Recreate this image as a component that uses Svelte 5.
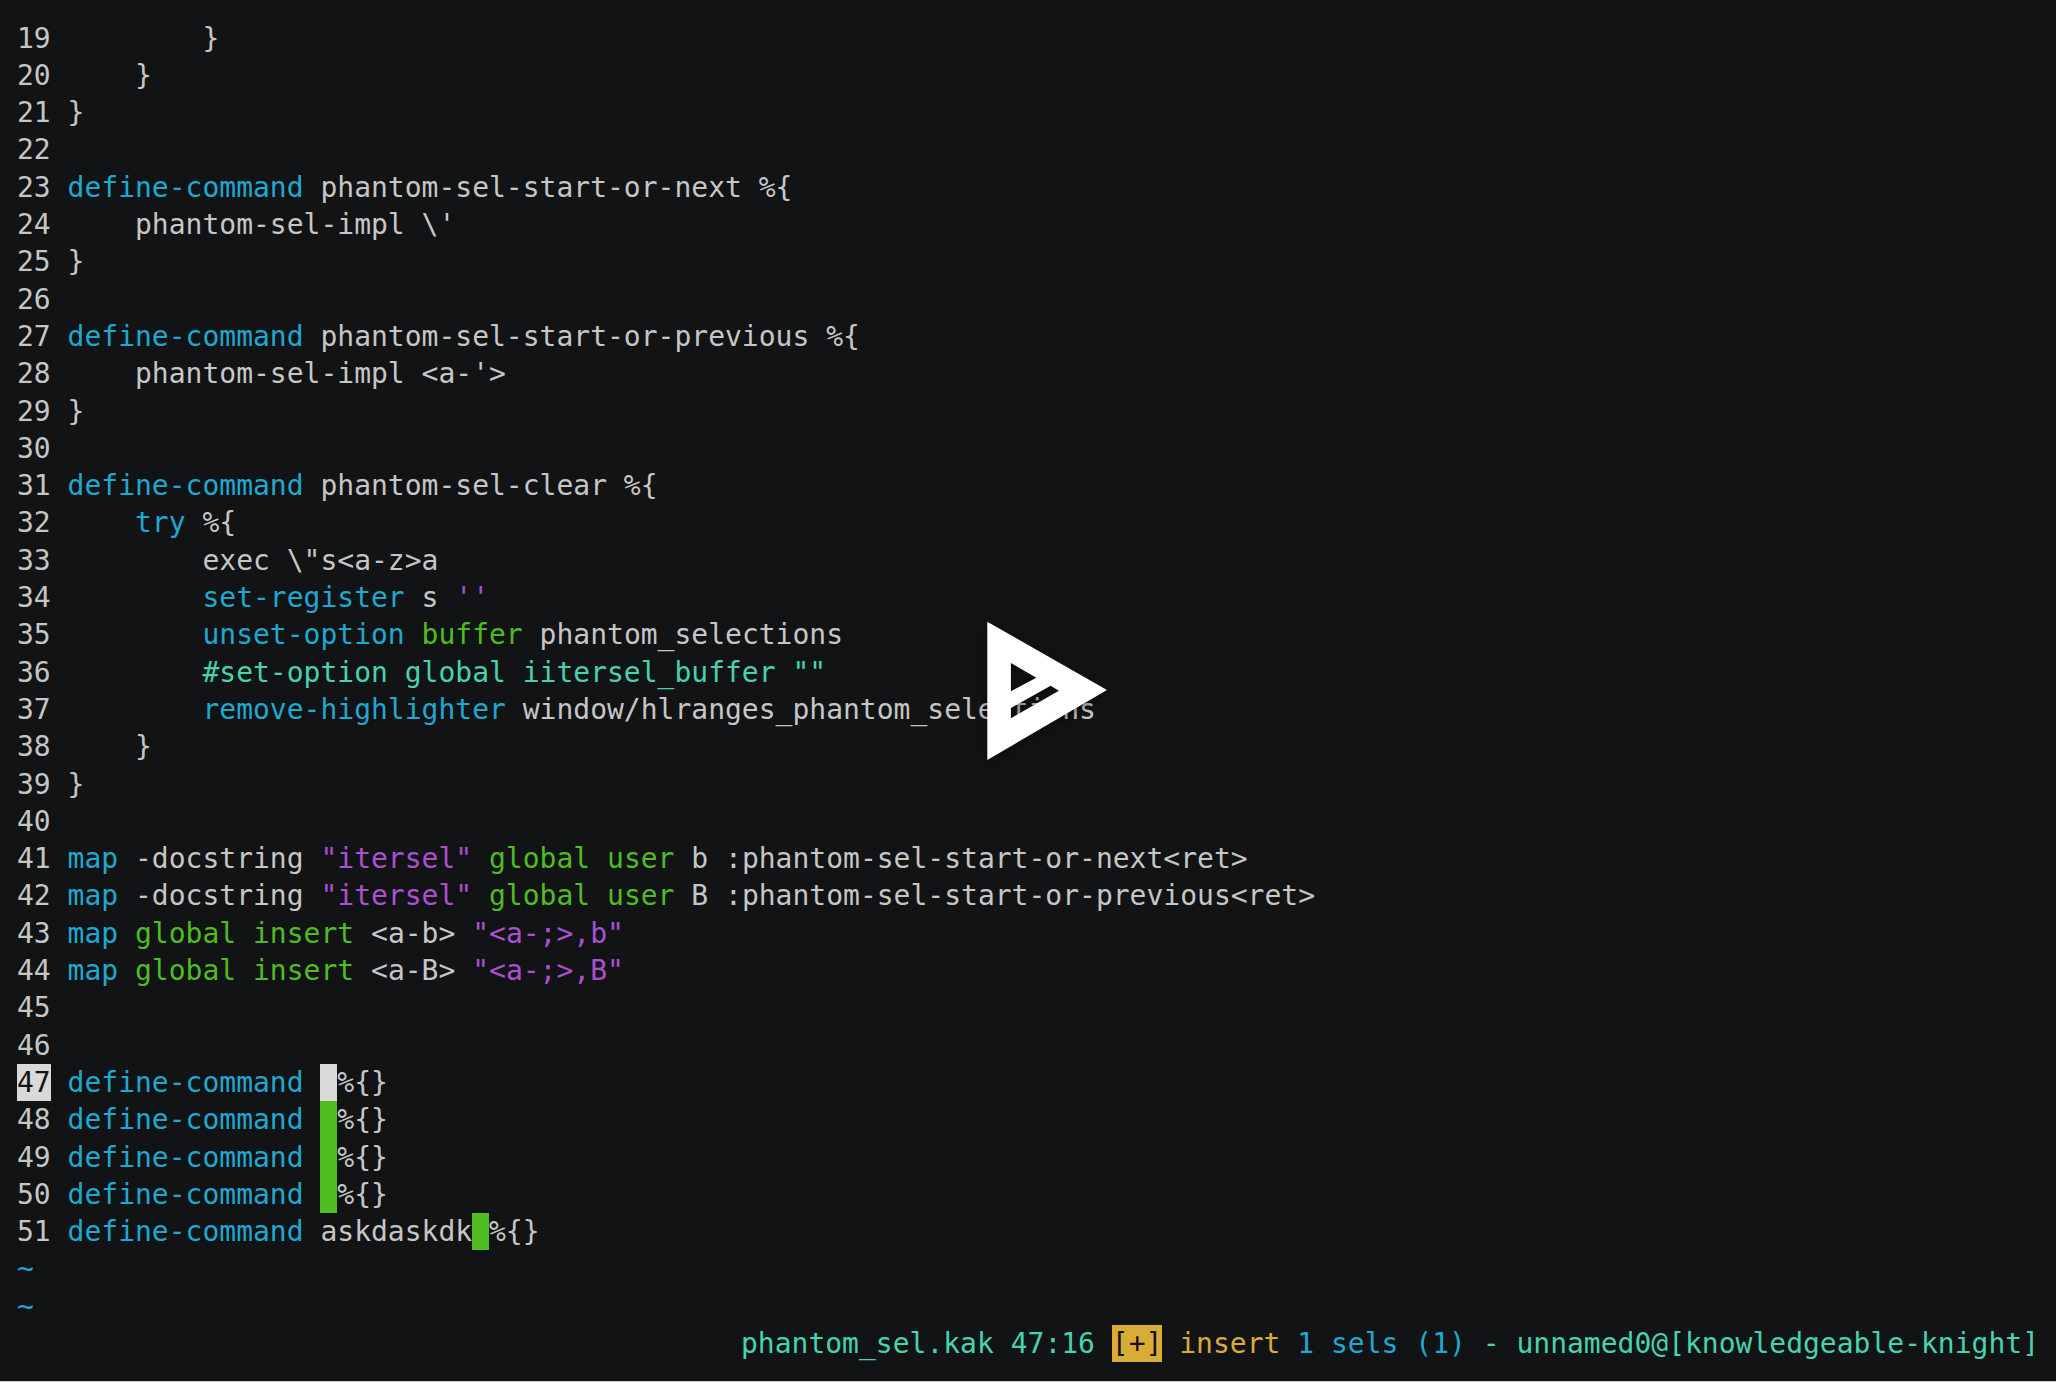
<script>
  const d = 'd', c = 'c', g = 'g', p = 'p', t = 't';
  const dc = [c, 'define-command'];
  const rows = [
    [19, [[d, '        }']]],
    [20, [[d, '    }']]],
    [21, [[d, '}']]],
    [22, []],
    [23, [dc, [d, ' phantom-sel-start-or-next %{']]],
    [24, [[d, '    phantom-sel-impl \\\'']]],
    [25, [[d, '}']]],
    [26, []],
    [27, [dc, [d, ' phantom-sel-start-or-previous %{']]],
    [28, [[d, "    phantom-sel-impl <a-'>"]]],
    [29, [[d, '}']]],
    [30, []],
    [31, [dc, [d, ' phantom-sel-clear %{']]],
    [32, [[d, '    '], [c, 'try'], [d, ' %{']]],
    [33, [[d, '        exec \\"s<a-z>a']]],
    [34, [[d, '        '], [c, 'set-register'], [d, ' s '], [p, "''"]]],
    [35, [[d, '        '], [c, 'unset-option'], [d, ' '], [g, 'buffer'], [d, ' phantom_selections']]],
    [36, [[d, '        '], [t, '#set-option global iitersel_buffer ""']]],
    [37, [[d, '        '], [c, 'remove-highlighter'], [d, ' window/hlranges_phantom_selections']]],
    [38, [[d, '    }']]],
    [39, [[d, '}']]],
    [40, []],
    [41, [[c, 'map'], [d, ' -docstring '], [p, '"itersel"'], [d, ' '], [g, 'global'], [d, ' '], [g, 'user'], [d, ' b :phantom-sel-start-or-next<ret>']]],
    [42, [[c, 'map'], [d, ' -docstring '], [p, '"itersel"'], [d, ' '], [g, 'global'], [d, ' '], [g, 'user'], [d, ' B :phantom-sel-start-or-previous<ret>']]],
    [43, [[c, 'map'], [d, ' '], [g, 'global'], [d, ' '], [g, 'insert'], [d, ' <a-b> '], [p, '"<a-;>,b"']]],
    [44, [[c, 'map'], [d, ' '], [g, 'global'], [d, ' '], [g, 'insert'], [d, ' <a-B> '], [p, '"<a-;>,B"']]],
    [45, []],
    [46, []],
    [47, [dc, [d, ' '], ['cur', ' '], [d, '%{}']]],
    [48, [dc, [d, ' '], ['sel', ' '], [d, '%{}']]],
    [49, [dc, [d, ' '], ['sel', ' '], [d, '%{}']]],
    [50, [dc, [d, ' '], ['sel', ' '], [d, '%{}']]],
    [51, [dc, [d, ' askdaskdk'], ['sel', ' '], [d, '%{}']]]
  ];
  const status = [
    [t, 'phantom_sel.kak 47:16 '],
    ['mod', '[+]'],
    ['y', ' insert '],
    [c, '1 sels (1)'],
    [t, ' - unnamed0@[knowledgeable-knight]']
  ];
</script>

<div class="term">
  <div class="buffer">
    {#each rows as [num, segs]}
      <div class="row">
        <span class="num" class:active={num === 47}>{num}</span>
        <span class="code">{#each segs as [k, s]}<span class={k}>{s}</span>{/each}</span>
      </div>
    {/each}
    <div class="row"><span class="c">~</span></div>
    <div class="row"><span class="c">~</span></div>
  </div>
  <div class="row status">
    {#each status as [k, s]}<span class={k}>{s}</span>{/each}
  </div>
  <svg class="logo" viewBox="0 0 122 142" width="122" height="142" aria-hidden="true">
    <path fill-rule="evenodd" fill="#fff" d="M1.3 1.7 L121 70 L1.3 140 Z M24.9 43 L24.9 71.3 L50.3 57.7 Z M24.9 88 L24.9 98.3 L72.9 70.7 L64.6 65.7 Z" />
  </svg>
</div>

<style>
  :global(body) {
    margin: 0;
    background: #111315;
  }
  .term {
    position: relative;
    box-sizing: border-box;
    width: 2056px;
    height: 1382px;
    padding: 19.6px 17px 0;
    background: #111315;
    border-bottom: 1px solid #c9c9c9;
    color: #c6c6c6;
    font-family: "DejaVu Sans Mono", monospace;
    font-size: 28px;
    overflow: hidden;
  }
  .row {
    display: flex;
    height: 37.3px;
    line-height: 37.3px;
    white-space: pre;
  }
  .num, .code {
    display: block;
  }
  .num {
    margin-right: 1ch;
  }
  .num.active {
    background: #d9d9d9;
    color: #111315;
  }
  .status {
    justify-content: flex-end;
  }
  .status span, .code span {
    display: inline-block;
    height: 37.3px;
  }
  .d { color: #c6c6c6; }
  .c { color: #1fa8d0; }
  .g { color: #4fbd21; }
  .p { color: #ac50d2; }
  .t { color: #45d4ae; }
  .y { color: #d9ac38; }
  .mod {
    background: #d9ac38;
    color: #111315;
  }
  .cur { background: #d9d9d9; }
  .sel { background: #4fbd21; }
  .logo {
    position: absolute;
    left: 986.4px;
    top: 620px;
    filter: drop-shadow(0 2px 6px rgba(0, 0, 0, 0.45));
  }
</style>
